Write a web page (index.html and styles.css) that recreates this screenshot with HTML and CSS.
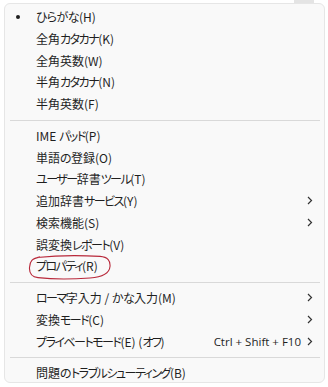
FILE: index.html
```html
<!DOCTYPE html>
<html lang="ja">
<head>
<meta charset="utf-8">
<link rel="stylesheet" href="styles.css">
</head>
<body>
<div class="backdrop"><div class="notch"></div></div>
<div class="menu">
  <div class="item"><span class="check"><span class="dot"></span></span><span class="label"><span class="h">ひらがな</span>(H)</span></div>
  <div class="item"><span class="check"></span><span class="label">全角<span class="k">カタカナ</span>(K)</span></div>
  <div class="item"><span class="check"></span><span class="label">全角英数(W)</span></div>
  <div class="item"><span class="check"></span><span class="label">半角<span class="k">カタカナ</span>(N)</span></div>
  <div class="item"><span class="check"></span><span class="label">半角英数(F)</span></div>
  <div class="sep"></div>
  <div class="item"><span class="check"></span><span class="label">IME <span class="k">パッド</span>(P)</span></div>
  <div class="item"><span class="check"></span><span class="label">単語<span class="h">の</span>登録(O)</span></div>
  <div class="item"><span class="check"></span><span class="label"><span class="k">ユーザー</span>辞書<span class="k">ツール</span>(T)</span></div>
  <div class="item"><span class="check"></span><span class="label">追加辞書<span class="k">サービス</span>(Y)</span><span class="arrow"><svg width="6" height="9" viewBox="0 0 6 9"><path d="M1 1l3.5 3.5L1 8" fill="none" stroke="#333" stroke-width="1.2"/></svg></span></div>
  <div class="item"><span class="check"></span><span class="label">検索機能(S)</span><span class="arrow"><svg width="6" height="9" viewBox="0 0 6 9"><path d="M1 1l3.5 3.5L1 8" fill="none" stroke="#333" stroke-width="1.2"/></svg></span></div>
  <div class="item"><span class="check"></span><span class="label">誤変換<span class="k">レポート</span>(V)</span></div>
  <div class="item circled"><span class="check"></span><span class="label"><span class="k">プロパティ</span>(R)</span>
    <svg class="ring" width="84" height="26" viewBox="0 0 84 26"><path d="M9 3.5C25 1.8 52 1.2 72 2.4C80 3 82.5 7 82 12.5C81.4 19 76 23 62 24C44 25.2 22 25 10 23.6C3.5 22.8 1.2 19 1.5 13.5C1.8 7.5 4 4.2 12 3.1" fill="none" stroke="#b8283a" stroke-width="1.1"/></svg>
  </div>
  <div class="sep"></div>
  <div class="item"><span class="check"></span><span class="label"><span class="k">ローマ</span>字入力 / <span class="h">かな</span>入力(M)</span><span class="arrow"><svg width="6" height="9" viewBox="0 0 6 9"><path d="M1 1l3.5 3.5L1 8" fill="none" stroke="#333" stroke-width="1.2"/></svg></span></div>
  <div class="item"><span class="check"></span><span class="label">変換<span class="k">モード</span>(C)</span><span class="arrow"><svg width="6" height="9" viewBox="0 0 6 9"><path d="M1 1l3.5 3.5L1 8" fill="none" stroke="#333" stroke-width="1.2"/></svg></span></div>
  <div class="item"><span class="check"></span><span class="label"><span class="k">プライベートモード</span>(E) (<span class="k">オフ</span>)</span><span class="shortcut">Ctrl + Shift + F10</span><span class="arrow"><svg width="6" height="9" viewBox="0 0 6 9"><path d="M1 1l3.5 3.5L1 8" fill="none" stroke="#333" stroke-width="1.2"/></svg></span></div>
  <div class="sep"></div>
  <div class="item"><span class="check"></span><span class="label">問題<span class="h">の</span><span class="k">トラブルシューティング</span>(B)</span></div>
</div>
</body>
</html>
```
FILE: styles.css
```css
html, body {
  margin: 0;
  padding: 0;
  background: #ffffff;
  width: 328px;
  height: 387px;
  overflow: hidden;
}
body {
  position: relative;
  font-family: "Noto Sans CJK JP", "Noto Sans", sans-serif;
  font-feature-settings: "palt";
  font-size: 12px;
  color: #1f1f1f;
}
.backdrop {
  position: absolute;
  left: 0;
  top: 0;
  width: 328px;
  height: 3px;
}
.notch {
  position: absolute;
  left: 294px;
  top: 0;
  width: 20px;
  height: 3px;
  background: #e4e4e4;
}
.menu {
  margin: 3px 3px 0 4px;
  height: 380px;
  box-sizing: border-box;
  background: #f9f9f9;
  border: 1px solid #e6e6e6;
  border-radius: 6px;
  padding: 2px 0 0 0;
}
.item {
  position: relative;
  display: flex;
  align-items: center;
  height: 21.75px;
  line-height: 21.75px;
}
.check {
  width: 31px;
  flex: none;
  display: flex;
  justify-content: center;
  align-items: center;
}
.dot {
  width: 4px;
  height: 4px;
  border-radius: 50%;
  background: #1f1f1f;
  margin-right: 5px;
}
.label {
  flex: 1;
  white-space: nowrap;
}
.k {
  letter-spacing: -1.5px;
}
.h {
  letter-spacing: -0.6px;
}
.shortcut {
  font-family: "Open Sans", "Noto Sans", sans-serif;
  font-size: 11.5px;
  margin-right: 6px;
  white-space: nowrap;
}
.arrow {
  width: 6px;
  margin-right: 11px;
  display: flex;
  align-items: center;
}
.sep {
  height: 1px;
  background: #d9d9d9;
  margin: 5px 4px 4px 5px;
}
.ring {
  position: absolute;
  left: 23px;
  top: -1px;
}
```
